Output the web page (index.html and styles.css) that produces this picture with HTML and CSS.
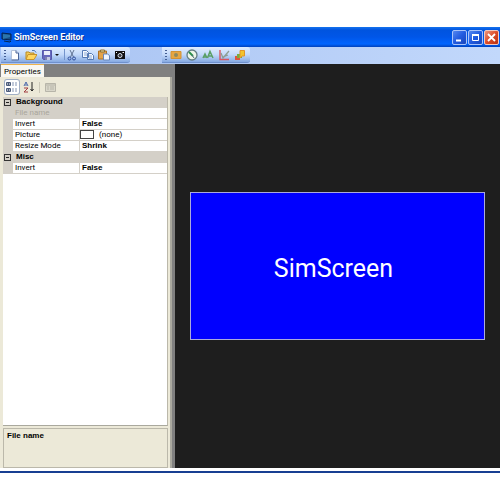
FILE: index.html
```html
<!DOCTYPE html>
<html lang="en">
<head>
<meta charset="utf-8">
<title>SimScreen Editor</title>
<link rel="stylesheet" href="styles.css">
</head>
<body>
<div class="window">
  <header class="titlebar">
    <svg class="app-icon" viewBox="0 0 11 11"><path d="M1 1l9 1v6l-9-1z" fill="#164d88" stroke="#06234f"/><path d="M2 2l7 1v2l-7 2z" fill="#2b75ac"/><path d="M3 9l6 1 1-1" stroke="#04264f" fill="none"/></svg>
    <h1>SimScreen Editor</h1>
    <div class="window-buttons">
      <button aria-label="Minimize"><svg viewBox="0 0 13 13"><path d="M3 9.500h5" stroke="#fff" stroke-width="2"/></svg></button>
      <button aria-label="Maximize"><svg viewBox="0 0 13 13"><path d="M3.500 4v5.500h6V4" stroke="#fff" fill="none"/><path d="M3 4h7" stroke="#fff" stroke-width="2"/></svg></button>
      <button class="close" aria-label="Close"><svg viewBox="0 0 13 13"><path d="M3 3l7 7M10 3l-7 7" stroke="#fff" stroke-width="1.800"/></svg></button>
    </div>
  </header>
  <nav class="toolbars">
    <div class="toolbar main-tools">
      <span class="grip"></span>
      <button aria-label="New"><svg viewBox="0 0 12 12"><path d="M2.500 1.500h4.500l2.500 2.500v7h-7z" fill="#fff" stroke="#b3c2da"/><path d="M7 1.500V4h2.500v7h-7" fill="none" stroke="#49659a"/></svg></button>
      <button aria-label="Open"><svg viewBox="0 0 12 12"><path d="M1 10V3h3l1 1h4v2" fill="#f3cb58" stroke="#b88a25"/><path d="M1 10.500l2-5h9l-3 5z" fill="#ffd65f" stroke="#c8932b"/><path d="M7 1.500q3-1 4 2" stroke="#4e7ab5" fill="none"/></svg></button>
      <button aria-label="Save"><svg viewBox="0 0 12 12"><path d="M1.500 1.500h9v9h-8l-1-1z" fill="#6668bd" stroke="#5557ac"/><path d="M3 2h6v4H3z" fill="#e9edfa"/><path d="M4 8h5v3H4z" fill="#c3c8e2"/><path d="M5 8v3" stroke="#39397f"/></svg></button>
      <button class="drop" aria-label="Save options"><svg viewBox="0 0 6 12"><path d="M1 5h4L3 7z" fill="#111"/></svg></button>
      <span class="separator"></span>
      <button aria-label="Cut"><svg viewBox="0 0 12 12"><path d="M4 1l3.500 7M8 1L4.500 8" stroke="#617393" fill="none"/><circle cx="3.500" cy="9.500" r="1.500" stroke="#314f9d" fill="none"/><circle cx="8" cy="9.500" r="1.500" stroke="#314f9d" fill="none"/></svg></button>
      <button aria-label="Copy"><svg viewBox="0 0 12 12"><path d="M.5 1.500h4l2 2v5h-6zM5.500 4.500h4l2 2v4h-6z" fill="#f5f9ff" stroke="#577bb5"/><path d="M2 4h3M2 6h3M7 7h3M7 9h3" stroke="#8da9d5"/></svg></button>
      <button aria-label="Paste"><svg viewBox="0 0 12 12"><path d="M.5 2h8v8h-8z" fill="#e3a34a" stroke="#ad7226"/><path d="M2.500 1h4v2h-4z" fill="#e8d898" stroke="#8b713a"/><path d="M5.500 5h4l2 1.500V11h-6z" fill="#eff5ff" stroke="#6685b9"/></svg></button>
      <button aria-label="Snapshot"><svg viewBox="0 0 12 12"><path d="M1 2h10v8H1z" fill="#111"/><circle cx="6" cy="6.500" r="2" fill="#333" stroke="#d9e3ef"/><path d="M8.500 3.500H10M2 3.500h1" stroke="#fff"/></svg></button>
    </div>
    <div class="toolbar item-tools">
      <span class="grip"></span>
      <button aria-label="Picture"><svg viewBox="0 0 12 12"><path d="M1 2.500h10v7H1z" fill="#e7a642" stroke="#d39234"/><circle cx="6" cy="6" r="2" fill="#8d8a60"/></svg></button>
      <button aria-label="Gauge"><svg viewBox="0 0 12 12"><circle cx="6" cy="6" r="5" fill="#edf5e9" stroke="#637e83" stroke-width="1.300"/><path d="M3 3l4 4" stroke="#288e49" stroke-width="1.800"/><path d="M6 6l2 3" stroke="#516779"/></svg></button>
      <button aria-label="Text"><svg viewBox="0 0 12 12"><path d="M1 9l2-4 2 4M2 8h3M5.500 9L8 2.500 11 9M7 7h3" fill="none" stroke="#5a9f66" stroke-width="1.500"/></svg></button>
      <button aria-label="Graph"><svg viewBox="0 0 12 12"><path d="M2 1v9.500h9" fill="none" stroke="#d95560" stroke-width="1.400"/><path d="M3 4l2 5 6-7M5 8l5-2" fill="none" stroke="#8d9c91" stroke-width="1.200"/></svg></button>
      <button aria-label="Bar"><svg viewBox="0 0 12 12"><path d="M1 7h5v4H1z" fill="#dc573d"/><path d="M3 5h5v4H3z" fill="#75ad42"/><path d="M6 1.500h4.500V7H8L6 9z" fill="#f2c42d" stroke="#e0952a"/></svg></button>
    </div>
  </nav>
  <main class="workspace">
    <aside class="sidebar">
      <div class="tabs"><button class="tab">Properties</button></div>
      <section class="panel">
        <div class="grid-tools">
          <button class="selected" aria-label="Categorized"><svg viewBox="0 0 12 12"><path d="M.5 1.500h4v3h-4zM.5 7.500h4v3h-4zM1 3h3M2.500 2v2M1 9h3M2.500 8v2" fill="none" stroke="#4b5c7b"/><path d="M6 2h2M6 4h2M6 8h2M6 10h2M9 2h2M9 4h2M9 8h2M9 10h2" stroke="#8293b3"/></svg></button>
          <button aria-label="Alphabetical"><svg viewBox="0 0 12 12"><path d="M1 5l2-4 2 4M2 4h2" fill="none" stroke="#4867aa"/><path d="M1 7h4l-4 4h4" fill="none" stroke="#a33e42"/><path d="M9 1v9M7.500 8L9 10l1.500-2" fill="none" stroke="#222"/></svg></button>
          <span class="separator"></span>
          <button aria-label="Property pages" disabled><svg viewBox="0 0 12 12"><path d="M1.500 2.500h10v8h-10zM1 4h10M3 6h2M3 8h2M6 6h4M6 8h4" fill="#d9d7ca" stroke="#b7b5a9"/></svg></button>
        </div>
        <div class="properties">
          <table>
            <colgroup><col class="gutter"><col class="names"><col></colgroup>
            <tbody>
              <tr class="category"><td><button class="toggle" aria-label="Collapse Background"></button></td><th colspan="2">Background</th></tr>
              <tr class="disabled"><td></td><th>File name</th><td></td></tr>
              <tr><td></td><th>Invert</th><td class="value">False</td></tr>
              <tr><td></td><th>Picture</th><td class="picture"><span class="swatch"></span>(none)</td></tr>
              <tr><td></td><th>Resize Mode</th><td class="value">Shrink</td></tr>
              <tr class="category"><td><button class="toggle" aria-label="Collapse Misc"></button></td><th colspan="2">Misc</th></tr>
              <tr><td></td><th>Invert</th><td class="value">False</td></tr>
            </tbody>
          </table>
        </div>
        <div class="description">File name</div>
      </section>
    </aside>
    <section class="canvas"><div class="screen">SimScreen</div></section>
  </main>
</div>
</body>
</html>
```
FILE: styles.css
```css
* { box-sizing: border-box; }
body { margin: 0; background: #fff; font: 8px/11px Roboto, "Liberation Sans", sans-serif; color: #000; }
button { border: 0; padding: 0; background: none; font: inherit; color: inherit; }
svg { display: block; }
.window { display: flex; flex-direction: column; height: calc(100vh - 54px); margin: 27px 0; border-bottom: 2px solid #183f92; }
.titlebar { display: flex; align-items: center; gap: 2px; height: 20px; padding: 0 1px; background: linear-gradient(#1473ee, #0054df 3px, #0056e8 10px, #0065ff 17px, #0041bb); }
.app-icon { width: 11px; height: 11px; }
h1 { flex: 1; margin: 0; color: #fff; font: bold 9px/12px Roboto, "Liberation Sans", sans-serif; text-shadow: 1px 1px 0 #0a318f; }
.window-buttons { display: flex; gap: 1px; }
.window-buttons button { width: 15px; height: 15px; border: 1px solid #a9c4fa; border-radius: 2px; background: linear-gradient(135deg, #5587ef, #215be0 50%, #1946ba); }
.window-buttons .close { border-color: #f1c9c0; background: linear-gradient(135deg, #ee967c, #dc4c28 50%, #b63013); }
.toolbars { display: flex; gap: 32px; height: 17px; padding-left: 1px; background: linear-gradient(90deg, #a7c2f2, #c2d8fb); }
.toolbar { display: flex; align-items: center; height: 16px; padding-left: 3px; background: linear-gradient(#e0edff, #c3d9fa 50%, #86aae2); border-radius: 0 3px 3px 0; border-bottom: 1px solid #6f91cd; }
.toolbar button { flex: none; width: 12px; height: 12px; margin-right: 4px; }
.toolbar .drop { width: 6px; margin-left: -3px; }
.grip { width: 2px; height: 10px; margin-right: 3px; background: repeating-linear-gradient(#455f94 0 1px, transparent 1px 3px); }
.separator { width: 1px; height: 11px; margin-right: 1px; background: #7494cc; }
.workspace { display: flex; flex: 1; min-height: 0; border-bottom: 3px solid #fff; }
.sidebar { display: flex; flex-direction: column; width: 35%; background: #808080; }
.tabs { height: 13px; padding-left: 1px; }
.tab { display: block; height: 13px; padding: 0 3px; border-top: 1px solid #efb44c; background: #f8f7f1; }
.panel { display: flex; flex-direction: column; flex: 1; margin-right: 3px; padding: 0 2px 0 3px; background: #ece9d8; border-right: 2px solid #aaa99f; }
.grid-tools { display: flex; align-items: center; gap: 4px; height: 20px; padding-left: 2px; }
.grid-tools button { width: 12px; height: 12px; }
.grid-tools .selected { width: 14px; height: 14px; padding: 1px; border-radius: 2px; background: #fff; box-shadow: 0 0 0 1px #a1afc5; }
.grid-tools .separator { margin: 0; background: #cbc8b8; }
.grid-tools svg { width: 12px; height: 12px; }
.properties { flex: 1; background: #fff; border-right: 1px solid #bbb8aa; border-bottom: 1px solid #aaa99e; }
table { width: 100%; table-layout: fixed; border-collapse: separate; border-spacing: 0; }
.gutter { width: 10px; }
.names { width: 67px; }
td, th { height: 11px; padding: 0 0 0 2px; font-weight: normal; line-height: 10px; text-align: left; border-bottom: 1px solid #d4d0c8; }
tr > :first-child { padding: 0; background: #d4d0c8; }
tr > :nth-child(2) { border-right: 1px solid #d4d0c8; }
.category > th { padding-left: 3px; font: bold 8px/10px "Liberation Sans", sans-serif; background: #d4d0c8; }
.value { font: bold 8px/10px "Liberation Sans", sans-serif; }
.disabled th { color: #aaa69c; background: #d4d0c8; }
.toggle { display: block; width: 7px; height: 7px; margin: 0 1px; border: 1px solid #333; background: linear-gradient(#222, #222) center / 3px 1px no-repeat; }
.picture { padding-left: 0; }
.swatch { display: inline-block; width: 14px; height: 9px; margin: 0 5px 0 0; border: 1px solid #444; vertical-align: top; }
.description { height: 40px; margin-top: 2px; padding: 1px 3px; border: 1px solid #bbb8aa; font: bold 8px/11px "Liberation Sans", sans-serif; }
.canvas { display: flex; flex: 1; align-items: center; justify-content: center; background: #1e1e1e; }
.screen { display: grid; place-items: center; width: 91%; aspect-ratio: 2 / 1; padding: 6px 8px 0 0; border: 1px solid #aaaadd; background: #00f; color: #fff; font: 25px/30px Roboto, "Liberation Sans", sans-serif; }
```
